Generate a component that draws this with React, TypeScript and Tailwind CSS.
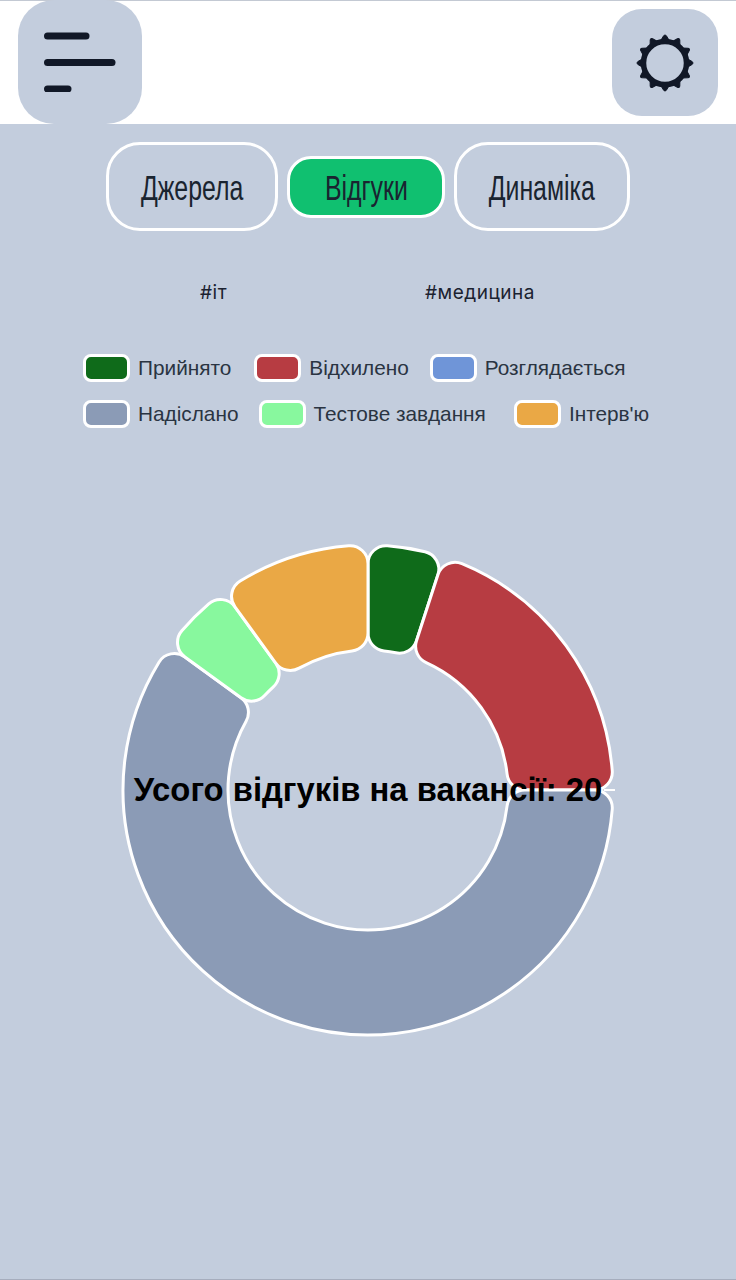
const legendRows = [
  [
    { label: "Прийнято", color: "bg-[#0f6b1a]", gap: "" },
    { label: "Відхилено", color: "bg-[#b73c42]", gap: "ml-[23px]" },
    { label: "Розглядається", color: "bg-[#6f95d8]", gap: "ml-[21px]" },
  ],
  [
    { label: "Надіслано", color: "bg-[#8b9bb6]", gap: "" },
    { label: "Тестове завдання", color: "bg-[#88f89e]", gap: "ml-[20px]" },
    { label: "Інтерв'ю", color: "bg-[#eaa845]", gap: "ml-[28px]" },
  ],
];

const slices = [
  { from: 0, to: 18, fill: "#0f6b1a" },
  { from: 18, to: 90, fill: "#b73c42" },
  { from: 90, to: 306, fill: "#8b9bb6" },
  { from: 306, to: 324, fill: "#88f89e" },
  { from: 324, to: 360, fill: "#eaa845" },
];

const CX = 250;
const CY = 250;

// angle in radians, clockwise from 12 o'clock
const pt = (r: number, a: number) =>
  `${(CX + r * Math.sin(a)).toFixed(2)} ${(CY - r * Math.cos(a)).toFixed(2)}`;

const slicePath = (fromDeg: number, toDeg: number, R: number, r: number, c: number) => {
  const a0 = (fromDeg * Math.PI) / 180;
  const a1 = (toDeg * Math.PI) / 180;
  const tOut = Math.asin(c / (R - c));
  const tIn = Math.asin(c / (r + c));
  const lOut = Math.sqrt((R - c) * (R - c) - c * c);
  const lIn = Math.sqrt((r + c) * (r + c) - c * c);
  const large = a1 - a0 > Math.PI ? 1 : 0;
  return [
    `M ${pt(R, a0 + tOut)}`,
    `A ${R} ${R} 0 ${large} 1 ${pt(R, a1 - tOut)}`,
    `A ${c} ${c} 0 0 1 ${pt(lOut, a1)}`,
    `L ${pt(lIn, a1)}`,
    `A ${c} ${c} 0 0 1 ${pt(r, a1 - tIn)}`,
    `A ${r} ${r} 0 ${large} 0 ${pt(r, a0 + tIn)}`,
    `A ${c} ${c} 0 0 1 ${pt(lIn, a0)}`,
    `L ${pt(lOut, a0)}`,
    `A ${c} ${c} 0 0 1 ${pt(R, a0 + tOut)}`,
    "Z",
  ].join(" ");
};

const GearIcon = () => (
  <svg width="60" height="60" viewBox="0 0 60 60">
    {Array.from({ length: 12 }).map((_, i) => (
      <path
        key={i}
        d="M25.5 8 L28.6 2.8 Q30 1 31.4 2.8 L34.5 8 Z"
        fill="#111827"
        stroke="#111827"
        strokeWidth="1"
        strokeLinejoin="round"
        transform={`rotate(${i * 30} 30 30)`}
      />
    ))}
    <circle cx="30" cy="30" r="21.5" fill="none" stroke="#111827" strokeWidth="5.5" />
  </svg>
);

const MenuIcon = () => (
  <svg width="72" height="60" viewBox="0 0 72 60">
    <g stroke="#111827" strokeWidth="7" strokeLinecap="round">
      <line x1="3.5" y1="4" x2="42" y2="4" />
      <line x1="3.5" y1="30.5" x2="68" y2="30.5" />
      <line x1="3.5" y1="57" x2="24" y2="57" />
    </g>
  </svg>
);

const TabLabel = ({ text }: { text: string }) => (
  <span className="font-['Liberation_Sans_Narrow','Liberation_Sans',sans-serif] text-[35px] leading-none text-[#1a2430] scale-x-[0.71] inline-block mt-[2px]">
    {text}
  </span>
);

export default function App() {
  return (
    <div className="min-h-screen bg-[#c3cddd] border-b border-[#a6adbd] font-['Liberation_Sans',sans-serif]">
      <header className="h-[124px] bg-white border-t border-[#c3c9d3] flex justify-between items-start pl-[18px] pr-[18px]">
        <button className="w-[124px] h-[124px] -mt-px rounded-[36px] bg-[#c3cddd] flex items-center pl-[26px]">
          <MenuIcon />
        </button>
        <button className="w-[106px] h-[107px] mt-2 rounded-[30px] bg-[#c3cddd] flex items-center justify-center">
          <GearIcon />
        </button>
      </header>

      <div className="flex justify-center items-center gap-[9px] mt-[18px]">
        <button className="w-[172px] h-[89px] border-[3px] border-white rounded-[34px] flex items-center justify-center">
          <TabLabel text="Джерела" />
        </button>
        <button className="w-[158px] h-[62px] border-[3px] border-white rounded-[24px] bg-[#10c070] flex items-center justify-center">
          <TabLabel text="Відгуки" />
        </button>
        <button className="w-[176px] h-[89px] border-[3px] border-white rounded-[34px] flex items-center justify-center">
          <TabLabel text="Динаміка" />
        </button>
      </div>

      <div className="flex mt-[51px] h-[22px] items-center text-[19px] tracking-[0.5px] text-[#1b2230] font-['Inter',sans-serif]">
        <span className="ml-[200px]">#іт</span>
        <span className="ml-[198px]">#медицина</span>
      </div>

      <div className="mt-[50px] pl-[83px] flex flex-col gap-[18px]">
        {legendRows.map((row, i) => (
          <div key={i} className="flex items-center">
            {row.map((item) => (
              <div key={item.label} className={`flex items-center gap-2 ${item.gap}`}>
                <span className={`w-[47px] h-[28px] border-[3px] border-white rounded-lg ${item.color}`} />
                <span className="text-[20.8px] leading-[28px] text-[#2a3442]">{item.label}</span>
              </div>
            ))}
          </div>
        ))}
      </div>

      <div className="relative w-[500px] h-[500px] mx-auto mt-[112px]">
        <svg width="500" height="500" viewBox="0 0 500 500">
          {slices.map((s) => (
            <path
              key={s.from}
              d={slicePath(s.from, s.to, 245, 140, 18)}
              fill={s.fill}
              stroke="#ffffff"
              strokeWidth="3"
            />
          ))}
          <line x1="486" y1="250" x2="497" y2="250" stroke="#ffffff" strokeWidth="2" />
        </svg>
        <p className="absolute left-[-16px] right-[-16px] top-[226px] text-center text-[32.8px] leading-[48px] font-bold text-black whitespace-nowrap">
          Усого відгуків на вакансії: 20
        </p>
      </div>
    </div>
  );
}
